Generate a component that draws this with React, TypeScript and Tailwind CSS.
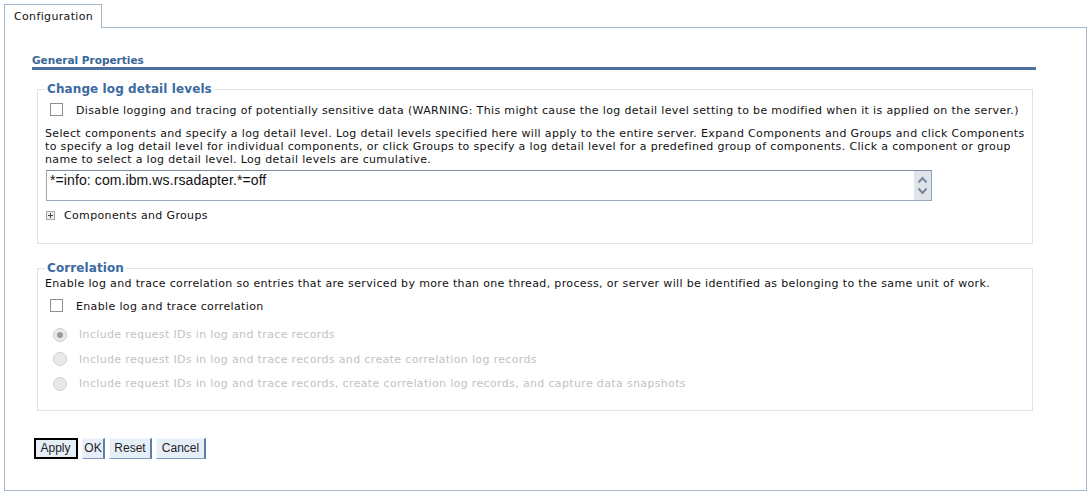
import React from "react";

function Checkbox() {
  return <span className="inline-block w-[13px] h-[13px] border border-[#8f8f8f] bg-white shrink-0" />;
}

function Radio({ checked }: { checked?: boolean }) {
  return (
    <span className="w-[14px] h-[14px] rounded-full border border-[#cfcfcf] bg-[#e9e9e9] flex items-center justify-center shrink-0">
      {checked && <span className="w-[6px] h-[6px] rounded-full bg-[#9a9a9a]" />}
    </span>
  );
}

function Btn({ label, w, focus }: { label: string; w: string; focus?: boolean }) {
  return (
    <button
      className={
        w +
        " h-[21px] px-0 bg-[#e6eef8] text-[12px] tracking-normal text-[#222] font-['Liberation_Sans',Arial,sans-serif] border-t border-l border-t-[#f4f7fb] border-l-[#f4f7fb] border-r-2 border-b border-r-[#5b7fab] border-b-[#7f9cc0] " +
        (focus ? "outline-2 outline-black -outline-offset-2" : "")
      }
    >
      {label}
    </button>
  );
}

const disabledOpts = [
  "Include request IDs in log and trace records",
  "Include request IDs in log and trace records and create correlation log records",
  "Include request IDs in log and trace records, create correlation log records, and capture data snapshots",
];

export default function App() {
  return (
    <div className="w-[1091px] h-[495px] overflow-hidden bg-white pt-[4px] pl-[4px] pb-[4px] flex flex-col font-['DejaVu_Sans',Verdana,sans-serif] text-[11px] tracking-[0.35px] text-[#111] leading-[13px]">
      {/* tab strip */}
      <div className="flex w-[1083px] h-[24px] shrink-0">
        <div className="w-[98px] h-[24px] border border-b-0 border-[#a8b8cc] pl-[9px] pt-[5px]">
          Configuration
        </div>
        <div className="flex-1 border-b border-[#a8b8cc]" />
      </div>

      <div className="w-[1083px] flex-1 min-h-0 border border-t-0 border-[#a8b8cc]">
        {/* section title */}
        <div className="ml-[27px] mr-[50px] mt-[26px] border-b-[3px] border-[#4d71a0] leading-[13px] font-bold tracking-normal text-[#3a6698] text-[10.5px]">
          General Properties
        </div>

        {/* change log detail levels */}
        <fieldset className="ml-[32px] mt-[11px] w-[996px] min-w-0 h-[163px] border border-[#e2e2e2] px-[7px]">
          <legend className="px-[2px] text-[12px] tracking-[0.1px] leading-[16px] font-bold text-[#3a6a9f]">
            Change log detail levels
          </legend>
          <div className="flex items-center mt-[5px] h-[17px]">
            <span className="ml-[5px]"><Checkbox /></span>
            <span className="ml-[13px] whitespace-nowrap">
              Disable logging and tracing of potentially sensitive data (WARNING: This might cause the log detail level setting to be modified when it is applied on the server.)
            </span>
          </div>
          <p className="mt-[8px] whitespace-nowrap">
            Select components and specify a log detail level. Log detail levels specified here will apply to the entire server. Expand Components and Groups and click Components
            <br />
            to specify a log detail level for individual components, or click Groups to specify a log detail level for a predefined group of components. Click a component or group
            <br />
            name to select a log detail level. Log detail levels are cumulative.
          </p>
          <div className="mt-[4px] ml-[1px] w-[886px] h-[31px] border border-[#98a6b8] border-t-[#7d8da3] flex">
            <div className="flex-1 pl-[3px] pt-[1px] text-[14px] tracking-[0.1px] leading-[16px] font-['Liberation_Sans',Arial,sans-serif] text-[#111]">
              *=info: com.ibm.ws.rsadapter.*=off
            </div>
            <div className="w-[17px] bg-[#dfe4ea] flex flex-col items-center justify-center gap-[3px]">
              <svg width="11" height="8" viewBox="0 0 11 8">
                <path d="M1.5 6.5 L5.5 2 L9.5 6.5" fill="none" stroke="#7a889c" strokeWidth="2" />
              </svg>
              <svg width="11" height="8" viewBox="0 0 11 8">
                <path d="M1.5 1.5 L5.5 6 L9.5 1.5" fill="none" stroke="#7a889c" strokeWidth="2" />
              </svg>
            </div>
          </div>
          <div className="flex items-center mt-[8px] ml-[1px]">
            <span className="w-[9px] h-[9px] border border-[#a7a7a7] bg-[#eeeeee] flex items-center justify-center relative">
              <span className="absolute w-[5px] h-[1px] bg-[#444]" />
              <span className="absolute w-[1px] h-[5px] bg-[#444]" />
            </span>
            <span className="ml-[9px]">Components and Groups</span>
          </div>
        </fieldset>

        {/* correlation */}
        <fieldset className="ml-[32px] mt-[16px] w-[996px] min-w-0 h-[151px] border border-[#e2e2e2] px-[7px]">
          <legend className="px-[2px] text-[12px] tracking-[0.1px] leading-[16px] font-bold text-[#3a6a9f]">
            Correlation
          </legend>
          <p className="whitespace-nowrap mt-[1px]">
            Enable log and trace correlation so entries that are serviced by more than one thread, process, or server will be identified as belonging to the same unit of work.
          </p>
          <div className="flex items-center mt-[8px] h-[17px]">
            <span className="ml-[5px]"><Checkbox /></span>
            <span className="ml-[13px]">Enable log and trace correlation</span>
          </div>
          <div className="flex flex-col gap-[9.5px] mt-[12px] ml-[8px]">
            {disabledOpts.map((t, i) => (
              <div key={t} className="flex items-center h-[15px]">
                <Radio checked={i === 0} />
                <span className="ml-[12px] text-[#c2c2c2] whitespace-nowrap">{t}</span>
              </div>
            ))}
          </div>
        </fieldset>

        {/* buttons */}
        <div className="flex ml-[29px] mt-[27px] gap-[4px]">
          <Btn label="Apply" w="w-[44px]" focus />
          <Btn label="OK" w="w-[23px]" />
          <Btn label="Reset" w="w-[43px]" />
          <Btn label="Cancel" w="w-[50px]" />
        </div>
      </div>
    </div>
  );
}
